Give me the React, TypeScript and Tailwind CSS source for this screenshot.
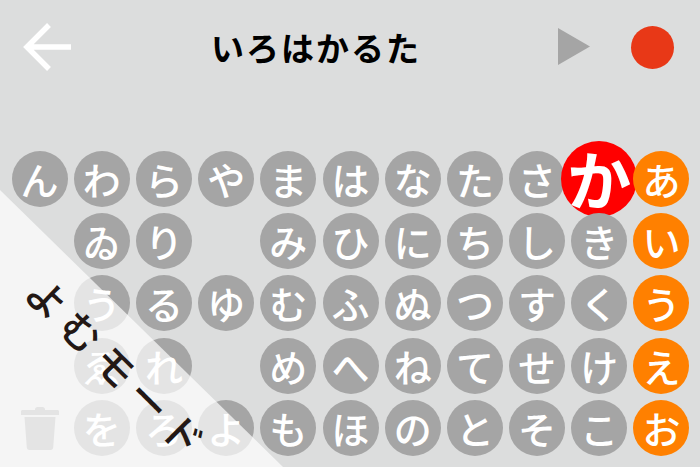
const rows: (string | null)[][] = [
  ["ん", "わ", "ら", "や", "ま", "は", "な", "た", "さ", "か", "あ"],
  [null, "ゐ", "り", null, "み", "ひ", "に", "ち", "し", "き", "い"],
  [null, "う", "る", "ゆ", "む", "ふ", "ぬ", "つ", "す", "く", "う"],
  [null, "ゑ", "れ", null, "め", "へ", "ね", "て", "せ", "け", "え"],
  ["trash", "を", "ろ", "よ", "も", "ほ", "の", "と", "そ", "こ", "お"],
];

const jp = "font-['Noto_Sans_CJK_JP','Noto_Sans',sans-serif]";

function Kana({ label, col, row }: { label: string; col: number; row: number }) {
  if (col === 9 && row === 0) {
    return (
      <div className="flex h-[76px] w-[76px] shrink-0 items-center justify-center rounded-full bg-[#ff0000] pb-1 text-[64px] font-bold leading-none text-white">
        {label}
      </div>
    );
  }
  return (
    <div
      className={`flex h-[56px] w-[56px] shrink-0 items-center justify-center rounded-full text-[38px] font-medium leading-none text-white ${
        col === 10 ? "bg-[#ff8000]" : "bg-[#a5a5a5]"
      }`}
    >
      {label}
    </div>
  );
}

export default function App() {
  return (
    <div className={`relative h-[467px] w-[700px] overflow-hidden bg-[#dcdddd] ${jp}`}>
      <div className="flex h-[95px] items-center pb-[1px] pl-[22px] pr-[26px]">
        <svg width="50" height="50" viewBox="0 0 50 50" fill="none" stroke="#fff" strokeWidth="5.5">
          <path d="M49 25H5M27 3L5 25l22 22" />
        </svg>
        <div className="flex-1 pl-[3px] text-center text-[33px] font-bold leading-none tracking-[2px] text-black">
          いろはかるた
        </div>
        <svg width="34" height="38" viewBox="0 0 34 38" className="mr-[40px]" fill="#a5a5a5">
          <path d="M1 0l32 18.500L1 37z" />
        </svg>
        <div className="h-[43px] w-[43px] rounded-full bg-[#e83817]" />
      </div>

      <div className="ml-[8.5px] mt-[53px] grid grid-cols-[repeat(11,62.2px)] auto-rows-[62.2px]">
        {rows.flatMap((r, y) =>
          r.map((label, x) => (
            <div key={`${y}-${x}`} className="flex items-center justify-center">
              {label === "trash" ? (
                <svg width="38" height="44" viewBox="0 0 38 44" fill="#a5a5a5">
                  <path d="M14 3.500C14 2 15 1 16.500 1h5C23 1 24 2 24 3.500V4h12.500c.8 0 1.500.7 1.500 1.500V9H0V5.500C0 4.700.7 4 1.500 4H14z" />
                  <path d="M3.500 11h31l-2.300 30.500c-.1 1.400-1 2.500-2.500 2.500H8.300c-1.500 0-2.400-1.100-2.500-2.500z" />
                </svg>
              ) : label ? (
                <Kana label={label} col={x} row={y} />
              ) : null}
            </div>
          ))
        )}
      </div>

      {/* corner ribbon */}
      <div className="absolute inset-0 bg-white/70 [clip-path:polygon(0_190px,283px_467px,0_467px)]" />
      <div className="absolute left-[119px] top-[368px] flex h-0 w-0 items-center justify-center">
        <span className="shrink-0 rotate-45 whitespace-nowrap text-[40px] font-medium leading-none tracking-[8px] text-[#231815]">
          よむモード
        </span>
      </div>
    </div>
  );
}
